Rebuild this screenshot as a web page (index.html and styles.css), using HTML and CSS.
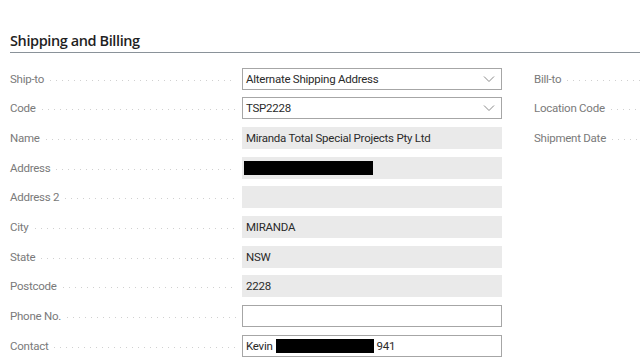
FILE: index.html
```html
<!DOCTYPE html>
<html>
<head>
<meta charset="utf-8">
<link rel="stylesheet" href="styles.css">
</head>
<body>
<div class="page">
  <h2 class="section-title">Shipping and Billing</h2>
  <div class="columns">
    <div class="col col-left">
      <div class="row"><span class="label">Ship-to</span><span class="leader"></span>
        <div class="field select">Alternate Shipping Address<svg class="chev" viewBox="0 0 12 8" width="12" height="8"><path d="M1 1.5 L6 6.5 L11 1.5" fill="none" stroke="#8a8a8a" stroke-width="1"/></svg></div></div>
      <div class="row"><span class="label">Code</span><span class="leader"></span>
        <div class="field select">TSP2228<svg class="chev" viewBox="0 0 12 8" width="12" height="8"><path d="M1 1.5 L6 6.5 L11 1.5" fill="none" stroke="#8a8a8a" stroke-width="1"/></svg></div></div>
      <div class="row"><span class="label">Name</span><span class="leader"></span>
        <div class="field ro">Miranda Total Special Projects Pty Ltd</div></div>
      <div class="row"><span class="label">Address</span><span class="leader"></span>
        <div class="field ro"><span class="redact r-addr"></span></div></div>
      <div class="row"><span class="label">Address 2</span><span class="leader"></span>
        <div class="field ro"></div></div>
      <div class="row"><span class="label">City</span><span class="leader"></span>
        <div class="field ro">MIRANDA</div></div>
      <div class="row"><span class="label">State</span><span class="leader"></span>
        <div class="field ro">NSW</div></div>
      <div class="row"><span class="label">Postcode</span><span class="leader"></span>
        <div class="field ro">2228</div></div>
      <div class="row"><span class="label">Phone No.</span><span class="leader"></span>
        <div class="field input"></div></div>
      <div class="row"><span class="label">Contact</span><span class="leader"></span>
        <div class="field input">Kevin <span class="redact r-contact"></span> 941</div></div>
    </div>
    <div class="col col-right">
      <div class="row"><span class="label">Bill-to</span><span class="leader"></span></div>
      <div class="row"><span class="label">Location Code</span><span class="leader"></span></div>
      <div class="row"><span class="label">Shipment Date</span><span class="leader"></span></div>
    </div>
  </div>
</div>
</body>
</html>
```

FILE: styles.css
```css
* { box-sizing: border-box; }
html, body { margin: 0; padding: 0; background: #fff; }
body {
  font-family: "Roboto", "Open Sans", "Liberation Sans", sans-serif;
  font-size: 11.5px;
  letter-spacing: -0.25px;
  color: #212121;
  overflow: hidden;
  width: 640px;
  height: 360px;
}
.page { padding: 0 0 0 10px; }
.section-title {
  margin: 0;
  padding-top: 31px;
  height: 53px;
  font-family: "Open Sans", "Noto Sans", sans-serif;
  font-size: 14.5px;
  font-weight: 600;
  line-height: 20px;
  color: #1f1f1f;
  border-bottom: 1px solid #8a9299;
  letter-spacing: -0.4px;
}
.columns {
  display: flex;
  padding-top: 11px;
}
.col-left { width: 492px; flex: none; }
.col-right { flex: 1; padding-left: 32px; }
.row {
  display: flex;
  align-items: center;
  height: 29.67px;
}
.label {
  color: #7a7a7a;
  white-space: nowrap;
  flex: none;
}
.leader {
  flex: 1;
  height: 1px;
  margin: 3px 0 0 6px;
  background-image: linear-gradient(to right, #d0d0d0 1px, transparent 1px);
  background-size: 6px 1px;
  background-repeat: repeat-x;
}
.col-left .leader { margin-right: 6px; }
.field {
  flex: none;
  width: 260px;
  height: 22px;
  display: flex;
  align-items: center;
  padding: 0 4px;
  color: #2a2a2a;
  white-space: nowrap;
}
.field.select, .field.input {
  border: 1px solid #a6a6a6;
  background: #fff;
  padding-left: 3px;
}
.field.select { justify-content: space-between; padding-right: 6px; }
.field.ro { background: #eaeaea; }
.chev { flex: none; }
.redact { display: inline-block; background: #000; height: 14px; }
.r-addr { width: 129px; margin-left: -2px; }
.r-contact { width: 98px; margin: 0 3px 0 3px; }
```
